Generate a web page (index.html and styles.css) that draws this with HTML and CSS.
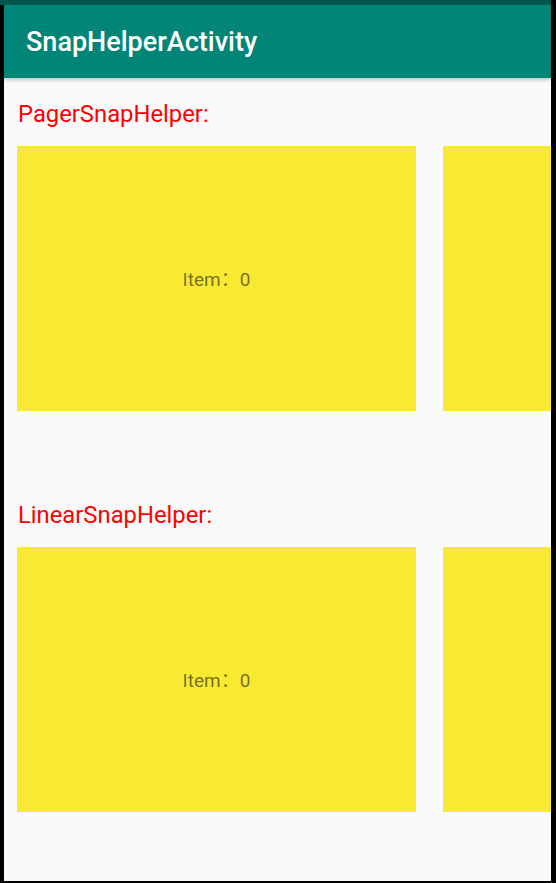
FILE: index.html
```html
<!DOCTYPE html>
<html>
<head>
<meta charset="utf-8">
<link rel="stylesheet" href="styles.css">
</head>
<body>
<div class="screen">
  <div class="status-bar"></div>
  <div class="window">
    <header class="app-bar">
      <h1 class="title">SnapHelperActivity</h1>
    </header>
    <main class="content">
      <section class="section">
        <div class="label">PagerSnapHelper:</div>
        <div class="scroller">
          <div class="card"><span class="card-text">Item：0</span></div>
          <div class="card"></div>
        </div>
      </section>
      <section class="section section-second">
        <div class="label">LinearSnapHelper:</div>
        <div class="scroller">
          <div class="card"><span class="card-text">Item：0</span></div>
          <div class="card"></div>
        </div>
      </section>
    </main>
  </div>
</div>
</body>
</html>
```
FILE: styles.css
```css
html, body {
  margin: 0;
  padding: 0;
  background: #000;
  overflow: hidden;
}
.screen {
  width: 551px;
  height: 881px;
  display: flex;
  flex-direction: column;
  font-family: Roboto, "Noto Sans", "Liberation Sans", "Noto Sans CJK SC", sans-serif;
}
.status-bar {
  height: 5px;
  background: #00574B;
  flex: none;
}
.window {
  flex: 1;
  margin-left: 4px;
  background: #FAFAFA;
  display: flex;
  flex-direction: column;
  overflow: hidden;
}
.app-bar {
  height: 73px;
  box-sizing: border-box;
  background: #008577;
  padding: 22px 0 0 22px;
  box-shadow: 0 2px 4px rgba(0, 0, 0, 0.22);
  position: relative;
  z-index: 1;
  flex: none;
}
.title {
  margin: 0;
  color: #fff;
  font-size: 27px;
  font-weight: 500;
  line-height: 30px;
}
.content {
  padding: 22px 0 0 13px;
}
.section-second {
  margin-top: 90px;
}
.label {
  color: #FF0000;
  font-size: 23.8px;
  line-height: 28px;
  margin-left: 1px;
}
.scroller {
  margin-top: 18px;
  display: flex;
  gap: 27px;
  overflow: hidden;
}
.card {
  flex: none;
  width: 399px;
  height: 265px;
  background: #F8E933;
  display: flex;
  align-items: center;
  justify-content: center;
}
.card-text {
  font-size: 19px;
  line-height: 24px;
  color: rgba(0, 0, 0, 0.54);
  margin-top: 2px;
}
```
